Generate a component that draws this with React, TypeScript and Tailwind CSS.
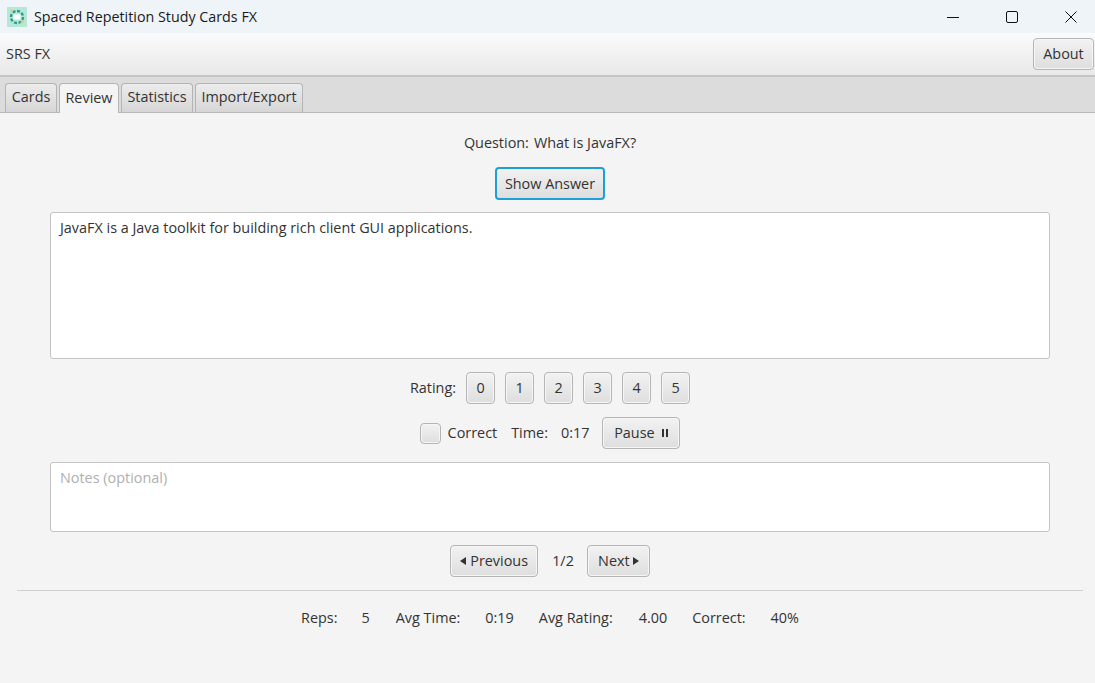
const font = "font-['Open_Sans','Noto_Sans',sans-serif]"

const btn =
  'flex items-center justify-center rounded-[4px] border border-[#b5b5b5] bg-gradient-to-b from-[#f2f2f2] to-[#dedede] text-[14.4px] text-[#333] shadow-[inset_0_0_0_1px_#f6f6f6]'

function AppIcon() {
  return (
    <svg width="20" height="20" viewBox="0 0 20 20">
      <rect width="20" height="20" fill="#b5e8d8" />
      <circle cx="10" cy="10" r="6" fill="none" stroke="#2a9d8f" strokeWidth="2.4" strokeDasharray="3 1.6" />
      <rect x="6.5" y="7.5" width="7" height="5" fill="#ffffff" />
      <circle cx="15" cy="15" r="1.4" fill="#e9c46a" />
      <circle cx="5" cy="4" r="1.2" fill="#e9c46a" />
    </svg>
  )
}

function Tab({ label, active, w }: { label: string; active?: boolean; w: string }) {
  return (
    <div
      className={`flex items-center justify-center rounded-t-[4px] border border-b-0 border-[#b5b5b5] pb-[2px] text-[14.4px] text-[#333] ${w} ${
        active ? 'h-[30px] translate-y-px bg-[#f4f4f4]' : 'h-[29px] bg-gradient-to-b from-[#ececec] to-[#d6d6d6]'
      }`}
    >
      {label}
    </div>
  )
}

export default function App() {
  return (
    <div className={`flex h-[683px] w-[1095px] flex-col overflow-hidden bg-[#f4f4f4] ${font}`}>
      {/* Window title bar */}
      <div className="flex h-[33px] items-center bg-[#eff4f9] pl-[7px]">
        <AppIcon />
        <span className="ml-[7px] text-[14.3px] text-[#1a1a1a]">Spaced Repetition Study Cards FX</span>
        <div className="ml-auto flex items-center">
          <svg width="12" height="12" viewBox="0 0 12 12" className="mr-[47px]">
            <path d="M0 6.5h12" stroke="#111" strokeWidth="1" />
          </svg>
          <svg width="12" height="12" viewBox="0 0 12 12" className="mr-[47px]">
            <rect x="0.5" y="0.5" width="11" height="11" rx="1.5" fill="none" stroke="#111" strokeWidth="1" />
          </svg>
          <svg width="12" height="12" viewBox="0 0 12 12" className="mr-[18px]">
            <path d="M0.5 0.5l11 11M11.5 0.5l-11 11" stroke="#111" strokeWidth="1" />
          </svg>
        </div>
      </div>

      {/* Tool bar */}
      <div className="flex h-[44px] items-center justify-between border-b-2 border-[#c4c4c4] bg-gradient-to-b from-[#fbfbfb] to-[#e8e8e8] pl-[6px] pr-[1px]">
        <span className="text-[14.4px] text-[#333]">SRS FX</span>
        <button className={`${btn} h-[32px] w-[61px]`}>About</button>
      </div>

      {/* Tabs */}
      <div className="flex h-[36px] items-end gap-[2px] border-b border-[#b8b8b8] bg-[#dcdcdc] pl-[5px]">
        <Tab label="Cards" w="w-[52px]" />
        <Tab label="Review" active w="w-[60px]" />
        <Tab label="Statistics" w="w-[72px]" />
        <Tab label="Import/Export" w="w-[108px]" />
      </div>

      {/* Review tab */}
      <div className="flex flex-1 flex-col items-center pl-[5px]">
        <div className="mt-[20px] flex h-[19px] items-center gap-[5px] text-[14.4px] text-[#333]">
          <span>Question:</span>
          <span>What is JavaFX?</span>
        </div>

        <button className="mt-[15px] flex h-[33px] w-[110px] items-center justify-center rounded-[4px] border-2 border-[#1e9fd6] bg-gradient-to-b from-[#f2f2f2] to-[#dedede] text-[14.4px] text-[#333]">
          Show Answer
        </button>

        <div className="mt-[12px] h-[147px] w-[1000px] rounded-[3px] border border-[#c4c4c4] bg-white px-[9px] py-[4px] text-[14.4px] text-[#333]">
          JavaFX is a Java toolkit for building rich client GUI applications.
        </div>

        <div className="mt-[13px] flex h-[32px] items-center gap-[10px] text-[14.4px] text-[#333]">
          <span>Rating:</span>
          {['0', '1', '2', '3', '4', '5'].map((n) => (
            <button key={n} className={`${btn} h-[32px] w-[29px]`}>
              {n}
            </button>
          ))}
        </div>

        <div className="mt-[13px] flex h-[32px] items-center text-[14.4px] text-[#333]">
          <span className={`${btn} h-[21px] w-[21px]`} />
          <span className="ml-[7px]">Correct</span>
          <span className="ml-[14px]">Time:</span>
          <span className="ml-[13px]">0:17</span>
          <button className={`${btn} ml-[13px] h-[32px] w-[78px] gap-[6px]`}>
            Pause
            <svg width="8" height="8" viewBox="0 0 8 8">
              <path d="M1 0h2v8H1zM5 0h2v8H5z" fill="#333" />
            </svg>
          </button>
        </div>

        <div className="mt-[13px] h-[70px] w-[1000px] rounded-[3px] border border-[#c4c4c4] bg-white px-[9px] py-[4px] text-[14.4px] text-[#b0b0b0]">
          Notes (optional)
        </div>

        <div className="mt-[13px] flex h-[32px] items-center text-[14.4px] text-[#333]">
          <button className={`${btn} h-[32px] w-[88px] gap-[4px]`}>
            <svg width="6" height="8" viewBox="0 0 6 8">
              <path d="M6 0v8L0 4z" fill="#333" />
            </svg>
            Previous
          </button>
          <span className="ml-[14px]">1/2</span>
          <button className={`${btn} ml-[13px] h-[32px] w-[63px] gap-[3px]`}>
            Next
            <svg width="6" height="8" viewBox="0 0 6 8">
              <path d="M0 0v8l6-4z" fill="#333" />
            </svg>
          </button>
        </div>

        <div className="mt-[13px] h-px w-[1066px] bg-[#d0d0d0]" />

        <div className="mt-[17px] flex h-[19px] items-center text-[14.4px] text-[#333]">
          <span>Reps:</span>
          <span className="ml-[24px]">5</span>
          <span className="ml-[26px]">Avg Time:</span>
          <span className="ml-[25px]">0:19</span>
          <span className="ml-[25px]">Avg Rating:</span>
          <span className="ml-[26px]">4.00</span>
          <span className="ml-[25px]">Correct:</span>
          <span className="ml-[25px]">40%</span>
        </div>
      </div>
    </div>
  )
}
